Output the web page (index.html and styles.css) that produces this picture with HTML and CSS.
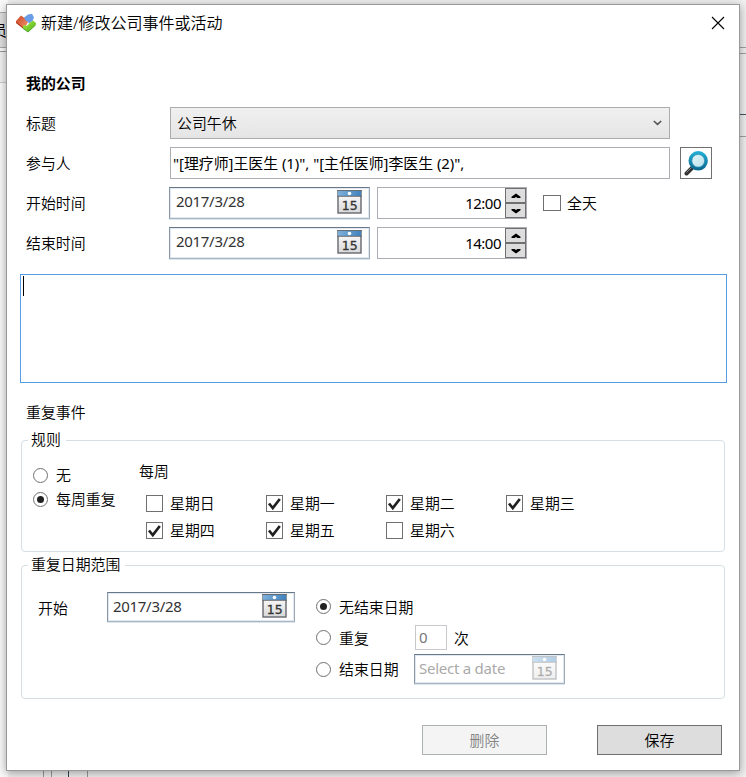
FILE: index.html
```html
<!DOCTYPE html>
<html lang="zh-CN">
<head>
<meta charset="utf-8">
<title>新建/修改公司事件或活动</title>
<link rel="stylesheet" href="styles.css">
</head>
<body>
<svg width="0" height="0" class="defs">
  <defs>
    <linearGradient id="blue" x1="0" y1="0" x2="1" y2="0"><stop offset="0" stop-color="#7db0dc"/><stop offset="1" stop-color="#3f83bf"/></linearGradient>
    <linearGradient id="paper" x1="0" y1="0" x2="0" y2="1"><stop offset="0" stop-color="#fff"/><stop offset="1" stop-color="#d8d8d8"/></linearGradient>
    <linearGradient id="ring" x1="0" y1="0" x2="0" y2="1"><stop offset="0" stop-color="#22acd3"/><stop offset="1" stop-color="#0b6b94"/></linearGradient>
    <linearGradient id="lens" x1="0" y1="0" x2="1" y2="1"><stop offset="0" stop-color="#e9f7fa"/><stop offset="1" stop-color="#b4dfe9"/></linearGradient>
    <linearGradient id="red" x1="0" y1="0" x2="1" y2="1"><stop offset="0" stop-color="#c9431f"/><stop offset="1" stop-color="#f39572"/></linearGradient>
    <linearGradient id="green" x1="0" y1="0" x2="1" y2="1"><stop offset="0" stop-color="#b9ef45"/><stop offset="1" stop-color="#42ae18"/></linearGradient>
    <symbol id="calendar" viewBox="0 0 25 24">
      <rect x="1" y="1" width="23" height="22" fill="url(#paper)" stroke="#66696d" stroke-width="1.4"/>
      <rect x="1" y="1" width="23" height="5" fill="url(#blue)"/>
      <path d="M0 .5H25M0 6.3H25" stroke="#686b70" stroke-width="1"/>
      <circle cx="12.5" cy="3.5" r="1.8" fill="#fff"/>
      <text x="12.7" y="19.5" text-anchor="middle" class="cal-day">15</text>
    </symbol>
    <symbol id="check" viewBox="0 0 15 15"><path d="M2 7.5L5.8 12L12.8 3" fill="none" stroke="#212121" stroke-width="2.7"/></symbol>
    <symbol id="up" viewBox="0 0 10 6"><path d="M.5 5V3.7L5 .4L9.5 3.7V5H6.5L5 4L3.5 5Z"/></symbol>
    <symbol id="down" viewBox="0 0 10 6"><path d="M.5 1V2.3L5 5.6L9.5 2.3V1H6.5L5 2L3.5 1Z"/></symbol>
  </defs>
</svg>
<div class="backdrop">
  <div class="left-strip"><div class="tool">员</div><div class="ribbon"></div></div>
  <div class="right-strip"></div>
  <div class="bottom-strip"></div>
</div>
<main class="window">
  <header class="titlebar">
    <svg class="logo" width="20" height="20" viewBox="0 0 20 20">
      <path d="M0 8L5 2.5L10 6L12 9L10 13L7 15L0 9.5Z" fill="url(#red)"/>
      <path d="M8 4.5L12 1.5L16 .8L18 4.5L16.5 8L13 10.5L11.5 8.5L9.5 7.5Z" fill="#6a9de6"/>
      <path d="M13 10.5L17 7.5L20 10L19.5 12L12 19L6 14.5L8 12L10.5 13L12 12Z" fill="url(#green)"/>
      <path d="M0 9.3L7 14.8" stroke="#b33a1c" stroke-width="1.2"/>
      <path d="M6.5 15L12 19L19.6 12" fill="none" stroke="#51a62a" stroke-width="1"/>
    </svg>
    <h1>新建/修改公司事件或活动</h1>
    <svg class="close" width="14" height="14" viewBox="0 0 14 14"><path d="M1 1L13 13M13 1L1 13" stroke="#000" stroke-width="1.1"/></svg>
  </header>

  <div class="form">
    <div class="row"><strong>我的公司</strong></div>
    <div class="row"><label>标题</label>
      <div class="combo"><span>公司午休</span><svg width="9" height="6" viewBox="0 0 9 6"><path d="M.8 1L4.5 4.4L8.2 1" fill="none" stroke="#555" stroke-width="1.6"/></svg></div>
    </div>
    <div class="row"><label>参与人</label>
      <div class="people">"[理疗师]王医生 (1)", "[主任医师]李医生 (2)",</div>
      <button class="search"><svg width="26" height="26" viewBox="0 0 26 26">
        <path d="M3.5 23.5L9 18" stroke="#333" stroke-width="4" stroke-linecap="round"/><path d="M3.5 22.5L8.5 17.5" stroke="#888" stroke-width="1"/>
        <circle cx="15.2" cy="10.8" r="8" fill="url(#lens)" stroke="url(#ring)" stroke-width="3.4"/>
        <circle cx="15.2" cy="10.8" r="6.4" fill="none" stroke="#3595b3" stroke-width=".7"/></svg></button>
    </div>
    <div class="row"><label>开始时间</label>
      <div class="date"><span>2017/3/28</span><svg class="cal"><use href="#calendar"/></svg></div>
      <div class="time"><span>12:00</span><div class="spin"><button><svg><use href="#up"/></svg></button><button><svg><use href="#down"/></svg></button></div></div>
      <div class="option all-day"><i class="box"></i><span>全天</span></div>
    </div>
    <div class="row"><label>结束时间</label>
      <div class="date"><span>2017/3/28</span><svg class="cal"><use href="#calendar"/></svg></div>
      <div class="time"><span>14:00</span><div class="spin"><button><svg><use href="#up"/></svg></button><button><svg><use href="#down"/></svg></button></div></div>
    </div>
  </div>

  <div class="notes"><i class="caret"></i></div>
  <div class="section-title">重复事件</div>

  <section class="group rules">
    <h2>规则</h2>
    <div class="rules-body">
      <div class="modes">
        <div class="option"><i class="radio"></i><span>无</span></div>
        <div class="option"><i class="radio on"></i><span>每周重复</span></div>
      </div>
      <div class="weekly">
        <div class="weekly-title">每周</div>
        <div class="days">
          <div class="option"><i class="box"></i><span>星期日</span></div>
          <div class="option"><i class="box"><svg><use href="#check"/></svg></i><span>星期一</span></div>
          <div class="option"><i class="box"><svg><use href="#check"/></svg></i><span>星期二</span></div>
          <div class="option"><i class="box"><svg><use href="#check"/></svg></i><span>星期三</span></div>
          <div class="option"><i class="box"><svg><use href="#check"/></svg></i><span>星期四</span></div>
          <div class="option"><i class="box"><svg><use href="#check"/></svg></i><span>星期五</span></div>
          <div class="option"><i class="box"></i><span>星期六</span></div>
        </div>
      </div>
    </div>
  </section>

  <section class="group range">
    <h2>重复日期范围</h2>
    <div class="range-body">
      <label>开始</label>
      <div class="date start"><span>2017/3/28</span><svg class="cal"><use href="#calendar"/></svg></div>
      <div class="ends">
        <div class="option"><i class="radio on"></i><span>无结束日期</span></div>
        <div class="option"><i class="radio"></i><span class="end-label">重复</span><div class="count">0</div><span>次</span></div>
        <div class="option"><i class="radio"></i><span class="end-label">结束日期</span><div class="date end"><span>Select a date</span><svg class="cal"><use href="#calendar"/></svg></div></div>
      </div>
    </div>
  </section>

  <footer class="actions"><button class="action" disabled>删除</button><button class="action">保存</button></footer>
</main>
</body>
</html>
```
FILE: styles.css
```css
* { box-sizing: border-box; }
html, body { margin: 0; height: 100%; overflow: hidden; }
body {
  padding: 4px 6px 6px;
  background: #f0f0f0;
  color: #000;
  font: 350 14.9px/20px "Noto Sans", "Noto Sans CJK SC", sans-serif;
}
button { margin: 0; padding: 0; font: inherit; }
label, span, strong, h1, h2 { white-space: nowrap; }
strong { font-weight: 700; }
.defs { position: absolute; }

.backdrop { position: absolute; inset: 0; overflow: hidden; }
.left-strip { position: absolute; left: 0; top: 0; width: 8px; height: 777px; background: #fafafa; }
.tool { margin-top: 12px; height: 36px; overflow: hidden; border: solid #aaa; border-width: 1px 0; background: #e0e0e0; line-height: 34px; text-indent: -8px; }
.ribbon { margin-top: 3px; height: 32px; border: solid #ccc; border-width: 1px 0; border-top-color: #999; background: #f2f2f2; }
.right-strip {
  position: absolute; right: 0; top: 0; width: 8px; height: 777px;
  background: linear-gradient(#a0a0a0, #a0a0a0) 0 47px / 100% 1px no-repeat,
    linear-gradient(#a0a0a0, #a0a0a0) 0 53px / 100% 1px no-repeat,
    linear-gradient(#445560, #445560) 0 114px / 100% 1px no-repeat,
    linear-gradient(#a0a0a0, #a0a0a0) 0 136px / 100% 1px no-repeat, #f0f0f0;
}
.bottom-strip {
  position: absolute; left: 43px; right: 0; bottom: 0; height: 8px;
  background: linear-gradient(#999, #999) 0 0 / 1px 100% no-repeat,
    linear-gradient(#999, #999) 8px 0 / 1px 100% no-repeat,
    linear-gradient(#344650, #344650) 25px 0 / 1px 100% no-repeat,
    linear-gradient(#999, #999) 44px 0 / 1px 100% no-repeat, #f0f0f0;
}

.window {
  position: relative;
  width: 734px; height: 767px;
  border: 1px solid #999;
  background: #fff;
  box-shadow: 0 2px 9px rgba(0, 0, 0, .36);
}
.titlebar { display: flex; align-items: center; height: 36px; padding: 0 14px 0 9px; }
.logo { margin-right: 5px; margin-top: -1px; }
.titlebar h1 { margin: 0; font-size: 16px; font-weight: 350; }
.close { margin-left: auto; }

.form { padding: 22px 0 0 19px; }
.row { display: flex; align-items: center; height: 40px; }
.row label { width: 144px; }
.combo, .people { width: 500px; height: 32px; border: 1px solid #acacac; }
.combo { display: flex; align-items: center; justify-content: space-between; padding: 0 7px 0 6px; background: linear-gradient(#f0f0f0, #e5e5e5); }
.people { padding: 5px 2px; border-color: #abadb3; white-space: pre; font-weight: 400; letter-spacing: -.02px; }
.search { width: 32px; height: 32px; margin-left: 10px; border: 1px solid #707070; background: #fff; }
.search svg { display: block; margin: 2px auto; }
.date {
  display: flex; align-items: center; justify-content: space-between;
  width: 201px; height: 32px; margin-left: -1px; padding: 0 7px 2px 6px;
  border: 1px solid; border-color: #66798b #9aa9b8 #a9b7c5 #8797a8;
  box-shadow: inset 0 0 0 1px #e2e8ee, 0 1px 0 #dce4ec;
  color: #333; font-size: 15px; font-weight: 400; letter-spacing: -.3px;
}
.date span { padding-bottom: 2px; }
.cal { width: 25px; height: 24px; flex: none; margin-top: -1px; }
.cal-day { font: 12.5px "DejaVu Sans", sans-serif; letter-spacing: 0; fill: #333; stroke: #333; stroke-width: .3; }
.time { display: flex; align-items: center; justify-content: flex-end; width: 150px; height: 32px; margin-left: 7px; border: 1px solid #abadb3; font-size: 15px; font-weight: 400; letter-spacing: -.5px; }
.spin { display: flex; flex-direction: column; width: 21px; margin-left: 4px; }
.spin button { display: flex; align-items: center; justify-content: center; height: 15px; border: 1px solid #707070; background: #ddd; }
.spin svg { width: 10px; height: 6px; }

.option { display: flex; align-items: center; }
.box { display: block; flex: none; width: 17px; height: 17px; margin-right: 7px; border: 1px solid #707070; background: #fff; }
.box svg { display: block; width: 15px; height: 15px; }
.all-day { margin-left: 16px; }
.all-day .box { width: 18px; height: 16px; margin-right: 6px; }
.radio { display: flex; flex: none; align-items: center; justify-content: center; width: 15px; height: 15px; margin-right: 8px; border: 1px solid #707070; border-radius: 50%; background: #fff; }
.radio.on::after { content: ""; width: 7px; height: 7px; border-radius: 50%; background: #212121; }

.notes { width: 707px; height: 109px; margin: 11px 0 0 13px; padding: 1px 2px; border: 1px solid #569de5; }
.caret { display: block; width: 1px; height: 20px; background: #000; }
.section-title { margin: 19px 0 0 19px; }
.group { width: 704px; margin-left: 14px; border: 1px solid #d5dfe5; border-radius: 4px; }
.group h2 { width: max-content; height: 20px; margin: -12px 0 0 6px; padding: 0 5px 0 3px; background: #fff; font-size: 14.9px; font-weight: 350; }
.rules { height: 112px; margin-top: 18px; }
.rules-body { display: flex; padding: 12px 0 0 11px; }
.modes { width: 106px; padding-top: 2px; }
.modes .option { height: 24px; }
.weekly-title { height: 20px; }
.days { display: grid; grid-template-columns: repeat(4, 120px); grid-auto-rows: 27px; margin: 8px 0 0 7px; }
.days .box { margin-top: 2px; }
.range { height: 134px; margin-top: 13px; }
.range-body { display: flex; align-items: flex-start; padding: 18px 0 0 16px; }
.range-body > label { width: 69px; padding-top: 6px; }
.date.start { width: 188px; height: 30px; margin-left: 0; padding-left: 5px; }
.date.start span { padding-bottom: 0; }
.ends { display: grid; grid-template-rows: 31px 31px 32px; margin: -1px 0 0 21px; }
.end-label { width: 76px; }
.count { width: 32px; height: 25px; margin-right: 7px; border: 1px solid #c8c9cc; padding: 1px 3px; color: #777; font-size: 15px; font-weight: 400; }
.date.end { width: 151px; height: 30px; padding-left: 4px; color: #aaa; letter-spacing: -.25px; }
.date.end span { padding-bottom: 0; }
.date.end .cal { opacity: .4; }
.actions { display: flex; gap: 50px; margin: 26px 0 0 415px; }
.action { width: 125px; height: 30px; border: 1px solid #707070; background: #ddd; color: #000; }
.action:disabled { border-color: #adb2b5; background: #f4f4f4; color: #838383; }
```
